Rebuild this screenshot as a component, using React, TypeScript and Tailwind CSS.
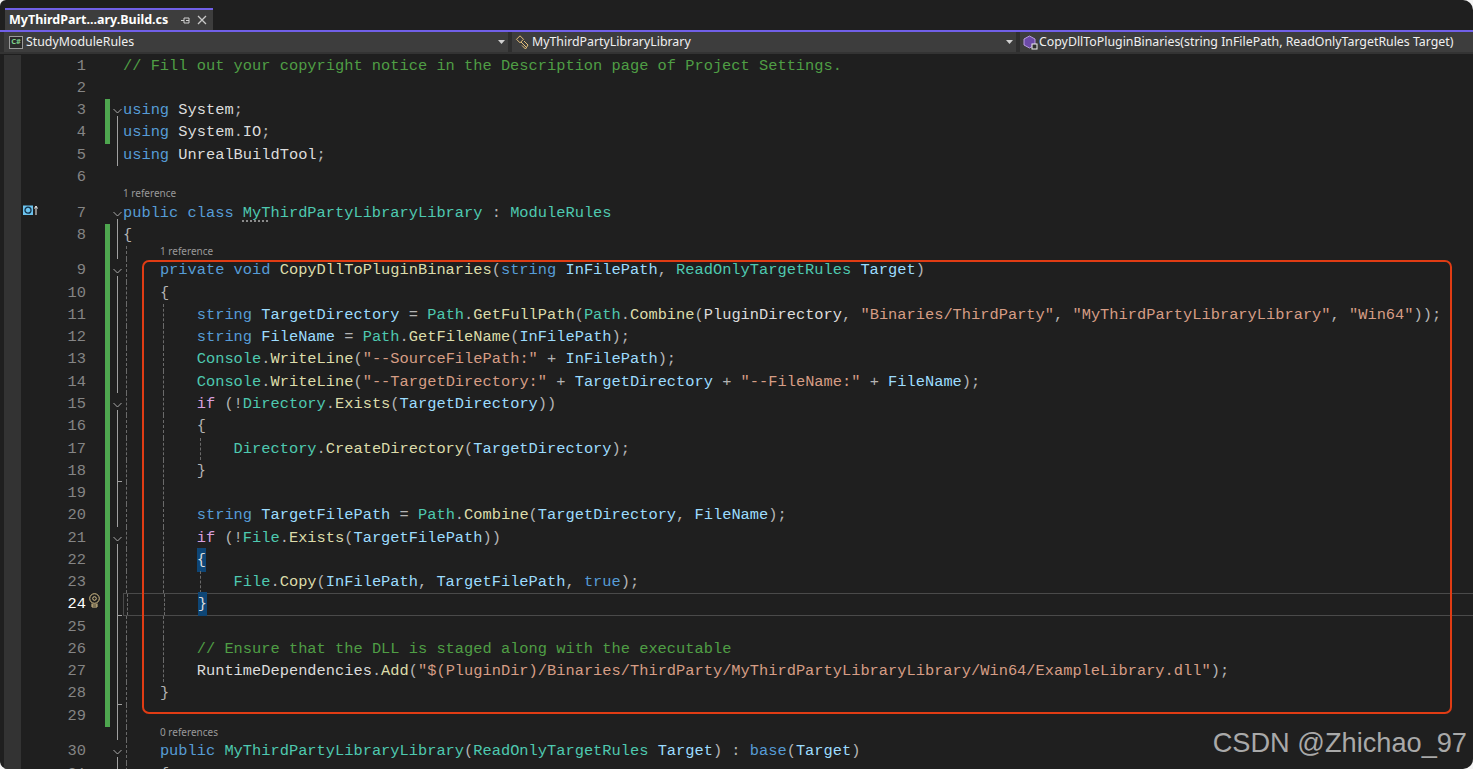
import type { ReactNode } from "react";

type Tok = "k" | "t" | "v" | "m" | "s" | "c" | "p" | "f" | "n" | "u" | "b";
type Seg = [string, Tok];

const tokClass: Record<Tok, string> = {
  k: "text-[#569cd6]",
  t: "text-[#4ec9b0]",
  v: "text-[#9cdcfe]",
  m: "text-[#dcdcaa]",
  s: "text-[#d69d85]",
  c: "text-[#4f9e45]",
  p: "text-[#b4b4b4]",
  f: "text-[#d8a0df]",
  n: "text-[#dcdcdc]",
  u: "text-[#4ec9b0] underline decoration-dotted decoration-[#b0b0b0] underline-offset-4",
  b: "bg-[#0e4676] py-[3px] text-[#dcdcdc]",
};

type Line = {
  no: number;
  code: Seg[];
  ref?: string;
  bar?: boolean;
  fold?: "chevron" | "line" | "tick" | "none";
  guides?: number[];
};

const sp = (n: number): Seg => [" ".repeat(n), "n"];

const lines: Line[] = [
  { no: 1, fold: "none", code: [["// Fill out your copyright notice in the Description page of Project Settings.", "c"]] },
  { no: 2, fold: "none", code: [] },
  { no: 3, bar: true, fold: "chevron", code: [["using", "k"], [" System", "n"], [";", "p"]] },
  { no: 4, bar: true, fold: "line", code: [["using", "k"], [" System", "n"], [".", "p"], ["IO", "n"], [";", "p"]] },
  { no: 5, fold: "line", code: [["using", "k"], [" UnrealBuildTool", "n"], [";", "p"]] },
  { no: 6, fold: "none", code: [] },
  {
    no: 7,
    ref: "1 reference",
    fold: "chevron",
    code: [["public class ", "k"], ["MyT", "u"], ["hirdPartyLibraryLibrary", "t"], [" : ", "p"], ["ModuleRules", "t"]],
  },
  { no: 8, bar: true, fold: "line", code: [["{", "p"]] },
  {
    no: 9,
    ref: "1 reference",
    bar: true,
    fold: "chevron",
    guides: [126],
    code: [sp(4), ["private void ", "k"], ["CopyDllToPluginBinaries", "m"], ["(", "p"], ["string ", "k"], ["InFilePath", "v"], [", ", "p"], ["ReadOnlyTargetRules ", "t"], ["Target", "v"], [")", "p"]],
  },
  { no: 10, bar: true, fold: "line", guides: [126], code: [sp(4), ["{", "p"]] },
  {
    no: 11,
    bar: true,
    fold: "line",
    guides: [126, 163],
    code: [sp(8), ["string ", "k"], ["TargetDirectory", "v"], [" = ", "p"], ["Path", "t"], [".", "p"], ["GetFullPath", "m"], ["(", "p"], ["Path", "t"], [".", "p"], ["Combine", "m"], ["(", "p"], ["PluginDirectory", "n"], [", ", "p"], ['"Binaries/ThirdParty"', "s"], [", ", "p"], ['"MyThirdPartyLibraryLibrary"', "s"], [", ", "p"], ['"Win64"', "s"], ["));", "p"]],
  },
  {
    no: 12,
    bar: true,
    fold: "line",
    guides: [126, 163],
    code: [sp(8), ["string ", "k"], ["FileName", "v"], [" = ", "p"], ["Path", "t"], [".", "p"], ["GetFileName", "m"], ["(", "p"], ["InFilePath", "v"], [");", "p"]],
  },
  {
    no: 13,
    bar: true,
    fold: "line",
    guides: [126, 163],
    code: [sp(8), ["Console", "t"], [".", "p"], ["WriteLine", "m"], ["(", "p"], ['"--SourceFilePath:"', "s"], [" + ", "p"], ["InFilePath", "v"], [");", "p"]],
  },
  {
    no: 14,
    bar: true,
    fold: "line",
    guides: [126, 163],
    code: [sp(8), ["Console", "t"], [".", "p"], ["WriteLine", "m"], ["(", "p"], ['"--TargetDirectory:"', "s"], [" + ", "p"], ["TargetDirectory", "v"], [" + ", "p"], ['"--FileName:"', "s"], [" + ", "p"], ["FileName", "v"], [");", "p"]],
  },
  {
    no: 15,
    bar: true,
    fold: "chevron",
    guides: [126, 163],
    code: [sp(8), ["if", "f"], [" (!", "p"], ["Directory", "t"], [".", "p"], ["Exists", "m"], ["(", "p"], ["TargetDirectory", "v"], ["))", "p"]],
  },
  { no: 16, bar: true, fold: "line", guides: [126, 163], code: [sp(8), ["{", "p"]] },
  {
    no: 17,
    bar: true,
    fold: "line",
    guides: [126, 163, 200],
    code: [sp(12), ["Directory", "t"], [".", "p"], ["CreateDirectory", "m"], ["(", "p"], ["TargetDirectory", "v"], [");", "p"]],
  },
  { no: 18, bar: true, fold: "tick", guides: [126, 163], code: [sp(8), ["}", "p"]] },
  { no: 19, bar: true, fold: "line", guides: [126, 163], code: [] },
  {
    no: 20,
    bar: true,
    fold: "line",
    guides: [126, 163],
    code: [sp(8), ["string ", "k"], ["TargetFilePath", "v"], [" = ", "p"], ["Path", "t"], [".", "p"], ["Combine", "m"], ["(", "p"], ["TargetDirectory", "v"], [", ", "p"], ["FileName", "v"], [");", "p"]],
  },
  {
    no: 21,
    bar: true,
    fold: "chevron",
    guides: [126, 163],
    code: [sp(8), ["if", "f"], [" (!", "p"], ["File", "t"], [".", "p"], ["Exists", "m"], ["(", "p"], ["TargetFilePath", "v"], ["))", "p"]],
  },
  { no: 22, bar: true, fold: "line", guides: [126, 163], code: [sp(8), ["{", "b"]] },
  {
    no: 23,
    bar: true,
    fold: "line",
    guides: [126, 163, 200],
    code: [sp(12), ["File", "t"], [".", "p"], ["Copy", "m"], ["(", "p"], ["InFilePath", "v"], [", ", "p"], ["TargetFilePath", "v"], [", ", "p"], ["true", "k"], [");", "p"]],
  },
  { no: 24, bar: true, fold: "tick", guides: [126, 163], code: [sp(8), ["}", "b"]] },
  { no: 25, bar: true, fold: "line", guides: [126, 163], code: [] },
  { no: 26, bar: true, fold: "line", guides: [126, 163], code: [sp(8), ["// Ensure that the DLL is staged along with the executable", "c"]] },
  {
    no: 27,
    bar: true,
    fold: "line",
    guides: [126, 163],
    code: [sp(8), ["RuntimeDependencies", "n"], [".", "p"], ["Add", "m"], ["(", "p"], ['"$(PluginDir)/Binaries/ThirdParty/MyThirdPartyLibraryLibrary/Win64/ExampleLibrary.dll"', "s"], [");", "p"]],
  },
  { no: 28, bar: true, fold: "tick", guides: [126], code: [sp(4), ["}", "p"]] },
  { no: 29, bar: true, fold: "line", guides: [126], code: [] },
  {
    no: 30,
    ref: "0 references",
    fold: "chevron",
    guides: [126],
    code: [sp(4), ["public ", "k"], ["MyThirdPartyLibraryLibrary", "t"], ["(", "p"], ["ReadOnlyTargetRules ", "t"], ["Target", "v"], [") : ", "p"], ["base", "k"], ["(", "p"], ["Target", "v"], [")", "p"]],
  },
  { no: 31, fold: "line", guides: [126], code: [sp(4), ["{", "p"]] },
];

function Chevron() {
  return (
    <svg width="9" height="6" viewBox="0 0 9 6" fill="none" stroke="#a8a8a8" strokeWidth="1">
      <path d="M0.5 1 L4.5 5 L8.5 1" />
    </svg>
  );
}

function Guide({ x }: { x: number }) {
  const pos: Record<number, string> = { 126: "left-[3px]", 163: "left-[40px]", 200: "left-[77px]" };
  return <span className={`absolute top-0 bottom-0 border-l border-dashed border-[#6a6a6a] ${pos[x]}`} />;
}

function FoldCell({ kind }: { kind?: Line["fold"] }) {
  if (kind === "none" || !kind) return <div className="relative w-[13px] shrink-0" />;
  return (
    <div className="relative flex w-[13px] shrink-0 items-center">
      {kind === "chevron" ? (
        <>
          <span className="absolute left-[3px] top-[9px]">
            <Chevron />
          </span>
          <span className="absolute left-[7px] top-[17px] bottom-0 w-px bg-[#a0a0a0]" />
        </>
      ) : (
        <span className="absolute left-[7px] top-0 bottom-0 w-px bg-[#a0a0a0]" />
      )}
      {kind === "tick" ? <span className="absolute bottom-0 left-[7px] h-px w-[5px] bg-[#a0a0a0]" /> : null}
    </div>
  );
}

function Gutter({ children, bar }: { children?: ReactNode; bar?: boolean }) {
  return (
    <>
      <div className="h-full w-[17px] shrink-0 bg-[#333333]">{children}</div>
      <div className="h-full w-[84px] shrink-0" />
      <div className={`h-full w-[5px] shrink-0 ${bar ? "bg-[#4ea64f]" : ""}`} />
    </>
  );
}

function LightBulb() {
  return (
    <svg className="absolute left-[88px] top-[0px]" width="13" height="15" viewBox="0 0 13 15" fill="none" stroke="#d9c38c" strokeWidth="1">
      <circle cx="6.5" cy="5.5" r="4.8" />
      <circle cx="6.5" cy="5.5" r="1.8" />
      <path d="M4 10.5 V14 H9 V10.5 M4 12 H9" />
    </svg>
  );
}

function ImplMarker() {
  return (
    <svg className="absolute left-[23px] top-[3px]" width="16" height="11" viewBox="0 0 16 11" fill="none">
      <rect x="0" y="0.5" width="10" height="9.5" fill="#6cc3ee" />
      <circle cx="5" cy="5.2" r="3" stroke="#14324a" strokeWidth="1.3" />
      <path d="M13 10 V2 M11.5 3.5 L13 1 L14.5 3.5" stroke="#f2f2f2" strokeWidth="1" />
    </svg>
  );
}

function CodeRow({ line }: { line: Line }) {
  const current = line.no === 24;
  return (
    <>
      {line.ref ? (
        <div className="flex h-[13.3px] items-stretch pl-[4px]">
          <Gutter bar={line.bar} />
          <FoldCell kind={line.no === 9 || line.no === 30 ? "line" : "none"} />
          <div className="relative min-w-0 flex-1">
            {line.guides?.map((g) => <Guide key={g} x={g} />)}
            <span className={`absolute top-[-1px] font-['Noto_Sans'] text-[10px] leading-[13px] text-[#999999] ${line.no === 7 ? "left-0" : "left-[37px]"}`}>
              {line.ref}
            </span>
          </div>
        </div>
      ) : null}
      <div className="relative flex h-[22.27px] items-stretch pl-[4px]">
        <Gutter bar={line.bar}>{line.no === 7 ? <ImplMarker /> : null}</Gutter>
        <span
          className={`absolute left-[40px] top-0 w-[46px] text-right font-['Liberation_Mono'] text-[15.36px] leading-[22.25px] ${current ? "text-white" : "text-[#858585]"}`}
        >
          {line.no}
        </span>
        {current ? <LightBulb /> : null}
        <FoldCell kind={line.fold} />
        <div
          className={`relative min-w-0 flex-1 whitespace-pre font-['Liberation_Mono'] text-[15.36px] ${current ? "border-y border-l border-[#4a4a4a] leading-[20.25px]" : "leading-[22.25px]"}`}
        >
          {line.guides?.map((g) => <Guide key={g} x={g} />)}
          <span className="relative">
            {line.code.map((s, i) => (
              <span key={i} className={tokClass[s[1]]}>
                {s[0]}
              </span>
            ))}
          </span>
        </div>
      </div>
    </>
  );
}

function TabBar() {
  return (
    <div className="flex h-[30px] items-end pl-[5px]">
      <div className="flex h-[22px] w-[208px] items-center border-t-2 border-[#7160e8] bg-[#3d3d3d] pl-[4px]">
        <span className="w-[158px] shrink-0 font-['Noto_Sans'] text-[12.5px] font-bold leading-none text-white">MyThirdPart...ary.Build.cs</span>
        <svg className="ml-[14px]" width="9" height="9" viewBox="0 0 9 9" fill="none" stroke="#d0d0d0" strokeWidth="1">
          <path d="M0 4.5 H3 M3 2 H8 V7 H3 Z M5 4.5 H8" />
        </svg>
        <svg className="ml-[7px]" width="10" height="10" viewBox="0 0 10 10" fill="none" stroke="#c8c8c8" strokeWidth="1.3">
          <path d="M1 1 L9 9 M9 1 L1 9" />
        </svg>
      </div>
    </div>
  );
}

function DropArrow() {
  return (
    <svg className="ml-auto" width="7" height="4" viewBox="0 0 7 4" fill="#d0d0d0">
      <path d="M0 0 H7 L3.5 4 Z" />
    </svg>
  );
}

function NavBar() {
  return (
    <div className="border-t-2 border-[#7160e8]">
      <div className="flex h-[20px] items-stretch gap-[4px] bg-[#2e2e2e] pl-[4px] font-['Noto_Sans'] text-[12.35px] leading-none text-[#f0f0f0]">
        <div className="flex w-[504px] items-center bg-[#3d3d3d] pl-[5px] pr-[3px]">
          <span className="flex h-[13px] w-[14px] items-center justify-center border border-[#9a9a9a] bg-[#2a2a2a] text-[7.5px] font-bold text-[#7fd08a]">C#</span>
          <span className="ml-[3px]">StudyModuleRules</span>
          <DropArrow />
        </div>
        <div className="flex w-[504px] items-center bg-[#3d3d3d] pl-[3px] pr-[3px]">
          <svg width="17" height="15" viewBox="0 0 17 15" fill="none" stroke="#e5c07b" strokeWidth="1">
            <path d="M5 0.8 L8.5 4.3 L5 7.8 L1.5 4.3 Z M6 7 L11 12 M9 6 L13 10 L10.5 14 L7 10.5" />
          </svg>
          <span>MyThirdPartyLibraryLibrary</span>
          <DropArrow />
        </div>
        <div className="flex flex-1 items-center bg-[#3d3d3d] pl-[3px]">
          <svg width="16" height="15" viewBox="0 0 16 15" fill="none">
            <path d="M6.5 1 L12 4 V10 L6.5 13 L1 10 V4 Z" fill="#6c4aa8" stroke="#b79be0" strokeWidth="1" />
            <rect x="9" y="9" width="5" height="5" fill="#2e2e2e" stroke="#f0f0f0" strokeWidth="1" />
          </svg>
          <span>CopyDllToPluginBinaries(string InFilePath, ReadOnlyTargetRules Target)</span>
        </div>
      </div>
      <div className="h-[2px] bg-[#333333]" />
    </div>
  );
}

export default function App() {
  return (
    <div className="h-[769px] w-full overflow-hidden bg-[#f4f4f4]">
      <div className="relative h-full overflow-hidden rounded-tl-[6px] rounded-tr-[10px] rounded-br-[10px] rounded-bl-[8px] bg-[#1f1f1f]">
        <TabBar />
        <NavBar />
        <main className="h-[715px] overflow-hidden pt-[0.7px]">
          {lines.map((line) => (
            <CodeRow key={line.no} line={line} />
          ))}
        </main>
        {/* red annotation drawn over the code */}
        <div className="pointer-events-none absolute left-[142px] top-[260px] h-[454px] w-[1310px] rounded-[7px] border-2 border-[#e03c14]" />
        <div className="pointer-events-none absolute bottom-[13px] right-[6px] font-['Liberation_Sans'] text-[27.2px] leading-none text-[#a9a9a9]">CSDN @Zhichao_97</div>
      </div>
    </div>
  );
}
